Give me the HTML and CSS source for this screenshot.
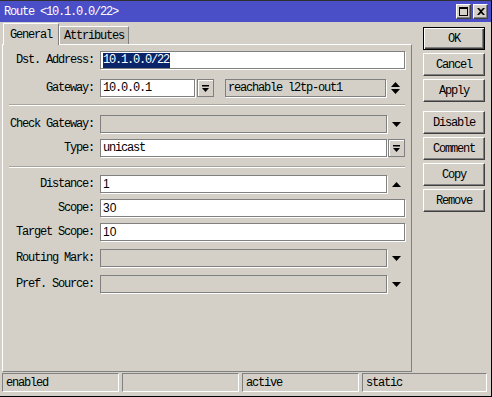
FILE: index.html
```html
<!DOCTYPE html>
<html lang="en">

<head>
    <meta charset="UTF-8">
    <title>Route</title>
    <link rel="stylesheet" href="styles.css">
</head>

<body>
    <div class="window">
        <div class="titlebar">
            <span class="title">Route &lt;10.1.0.0/22&gt;</span>
            <div class="title-btns">
                <span class="tbtn">
                    <svg width="9" height="9" viewBox="0 0 9 9"><rect x="0.5" y="0.5" width="8" height="8" fill="none" stroke="#000"/><rect x="0" y="0" width="9" height="2" fill="#000"/></svg>
                </span>
                <span class="tbtn">
                    <svg width="8" height="7" viewBox="0 0 8 7"><path d="M0 0h2l2 2 2-2h2L5 3.5 8 7H6L4 5 2 7H0l3-3.5z" fill="#000"/></svg>
                </span>
            </div>
        </div>

        <div class="main">
            <div class="left">
                <div class="tabs">
                    <span class="tab active">General</span>
                    <span class="tab">Attributes</span>
                </div>
                <div class="panel">
                    <div class="row">
                        <label>Dst. Address:</label>
                        <div class="field grow"><span class="sel">10.1.0.0/22</span></div>
                    </div>

                    <div class="row gap-10">
                        <label>Gateway:</label>
                        <div class="field gw">10.0.0.1</div>
                        <span class="dd">
                            <svg width="7" height="7" viewBox="0 0 7 7"><rect width="7" height="1.5"/><path d="M0 3h7L3.5 7z"/></svg>
                        </span>
                        <div class="field off reach">reachable l2tp-out1</div>
                        <span class="arrow">
                            <svg width="9" height="12" viewBox="0 0 9 12"><path d="M0 5h9L4.5 0zM0 7h9L4.5 12z"/></svg>
                        </span>
                    </div>

                    <div class="sep first"></div>

                    <div class="row gap-9">
                        <label>Check Gateway:</label>
                        <div class="field off grow"></div>
                        <span class="arrow"><svg width="9" height="5" viewBox="0 0 9 5"><path d="M0 0h9L4.5 5z"/></svg></span>
                    </div>

                    <div class="row">
                        <label>Type:</label>
                        <div class="field grow">unicast</div>
                        <span class="dd tight">
                            <svg width="7" height="7" viewBox="0 0 7 7"><rect width="7" height="1.5"/><path d="M0 3h7L3.5 7z"/></svg>
                        </span>
                    </div>

                    <div class="sep"></div>

                    <div class="row gap-7">
                        <label>Distance:</label>
                        <div class="field grow num">1</div>
                        <span class="arrow"><svg width="9" height="5" viewBox="0 0 9 5"><path d="M0 5h9L4.5 0z"/></svg></span>
                    </div>

                    <div class="row">
                        <label>Scope:</label>
                        <div class="field grow num">30</div>
                    </div>

                    <div class="row">
                        <label>Target Scope:</label>
                        <div class="field grow num">10</div>
                    </div>

                    <div class="row gap-8">
                        <label>Routing Mark:</label>
                        <div class="field off grow"></div>
                        <span class="arrow"><svg width="9" height="5" viewBox="0 0 9 5"><path d="M0 0h9L4.5 5z"/></svg></span>
                    </div>

                    <div class="row gap-8">
                        <label>Pref. Source:</label>
                        <div class="field off grow"></div>
                        <span class="arrow"><svg width="9" height="5" viewBox="0 0 9 5"><path d="M0 0h9L4.5 5z"/></svg></span>
                    </div>
                </div>
            </div>

            <div class="buttons">
                <button class="btn default">OK</button>
                <button class="btn">Cancel</button>
                <button class="btn">Apply</button>
                <button class="btn group">Disable</button>
                <button class="btn">Comment</button>
                <button class="btn">Copy</button>
                <button class="btn">Remove</button>
            </div>
        </div>

        <div class="statusbar">
            <div class="cell">enabled</div>
            <div class="cell"></div>
            <div class="cell">active</div>
            <div class="cell wide">static</div>
        </div>
    </div>
</body>

</html>
```

FILE: styles.css
```css
body {
    margin: 0;
    background-color: #d4d0c8;
    font-family: "Liberation Mono", monospace;
    font-size: 12px;
    letter-spacing: -1.2px;
    color: #000;
}

.window {
    width: 492px;
    height: 397px;
    box-sizing: border-box;
    border-top: 1px solid #303030;
    border-right: 1px solid #000;
    border-bottom: 1px solid #000;
    display: flex;
    flex-direction: column;
}

.titlebar {
    height: 21px;
    background-color: #4b4fc7;
    display: flex;
    align-items: center;
    justify-content: space-between;
    padding-left: 4px;
    padding-right: 3px;
}

.title {
    color: #fff;
}

.title-btns {
    display: flex;
    gap: 2px;
}

.tbtn {
    width: 15px;
    height: 15px;
    box-sizing: border-box;
    background-color: #d4d0c8;
    border: 1px solid;
    border-color: #fff #404040 #404040 #fff;
    box-shadow: inset -1px -1px #808080;
    display: flex;
    align-items: center;
    justify-content: center;
}

.main {
    height: 350px;
    display: flex;
}

.left {
    width: 410px;
    padding-left: 2px;
    padding-top: 1px;
    display: flex;
    flex-direction: column;
}

.tabs {
    height: 21px;
    display: flex;
    align-items: flex-end;
    padding-left: 1px;
}

.tab {
    box-sizing: border-box;
    height: 18px;
    padding: 0 6px;
    display: flex;
    align-items: center;
    justify-content: center;
    background-color: #c4c0b8;
    border-top: 1px solid #fff;
    border-left: 1px solid #fff;
    border-right: 1px solid #808080;
    width: 70px;
}

.tab.active {
    width: 56px;
    height: 22px;
    margin-bottom: -1px;
    background-color: #d4d0c8;
    position: relative;
    z-index: 1;
}

.panel {
    flex: 1;
    box-sizing: border-box;
    border: 1px solid;
    border-color: #fff #808080 #808080 #fff;
    padding: 6px 6px 0 6px;
    display: flex;
    flex-direction: column;
}

.row {
    height: 18px;
    display: flex;
    align-items: center;
    margin-top: 6px;
}

.row:first-child {
    margin-top: 0;
}

.row.gap-7 { margin-top: 7px; }
.row.gap-8 { margin-top: 8px; }
.row.gap-9 { margin-top: 9px; }
.row.gap-10 { margin-top: 10px; }

label {
    width: 85px;
    text-align: right;
    margin-right: 6px;
    flex-shrink: 0;
}

.field {
    height: 18px;
    box-sizing: border-box;
    border: 1px solid #808080;
    box-shadow: 1px 1px 0 #fff;
    background-color: #fff;
    padding-left: 2px;
    display: flex;
    align-items: center;
    white-space: nowrap;
}

.field.off {
    background-color: #d4d0c8;
}

.field.grow {
    flex: 1;
}

.field.num {
    font-family: "Liberation Sans", sans-serif;
    letter-spacing: 0;
}

.field.gw {
    width: 95px;
}

.field.reach {
    width: 161px;
    margin-left: 11px;
}

.sel {
    background-color: #0a246a;
    color: #fff;
    line-height: 15px;
    padding-right: 1px;
}

.dd {
    width: 17px;
    height: 18px;
    box-sizing: border-box;
    margin-left: 2px;
    border: 1px solid #808080;
    box-shadow: inset 1px 1px #fff;
    display: flex;
    align-items: center;
    justify-content: center;
}

.dd.tight {
    margin-left: 1px;
}

.arrow {
    width: 18px;
    height: 18px;
    display: flex;
    align-items: center;
    justify-content: center;
}

.sep {
    height: 0;
    border-top: 1px solid #a8a49c;
    border-bottom: 1px solid #fff;
    margin-top: 9px;
}

.sep.first {
    margin-top: 7px;
}

.buttons {
    margin-left: 11px;
    padding-top: 5px;
    display: flex;
    flex-direction: column;
    gap: 3px;
}

.btn {
    width: 62px;
    height: 23px;
    background-color: #d4d0c8;
    border: 1px solid;
    border-color: #fff #404040 #404040 #fff;
    box-shadow: inset -1px -1px #808080;
    font: inherit;
    letter-spacing: -1.2px;
    padding: 0;
    color: #000;
}

.btn.default {
    border-color: #000;
    box-shadow: inset 1px 1px #fff, inset -1px -1px #404040, inset -2px -2px #808080;
}

.btn.group {
    margin-top: 6px;
}

.statusbar {
    flex: 1;
    display: flex;
    gap: 3px;
    padding: 1px 0 0 2px;
}

.cell {
    width: 117px;
    height: 19px;
    box-sizing: border-box;
    border: 1px solid;
    border-color: #808080 #fff #fff #808080;
    padding-left: 3px;
    display: flex;
    align-items: center;
}

.cell.wide {
    width: 125px;
}
```
